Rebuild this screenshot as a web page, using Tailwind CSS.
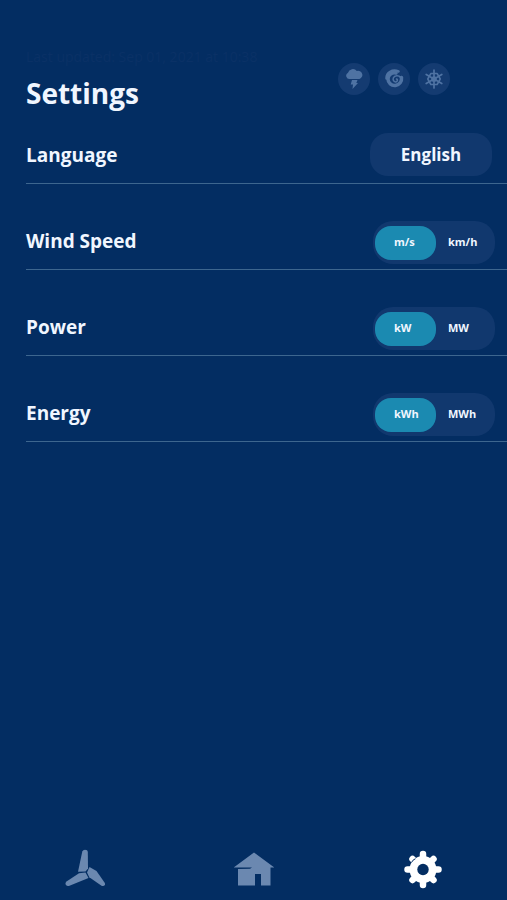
<!DOCTYPE html>
<html lang="en">
<head>
  <meta charset="UTF-8" />
  <meta name="viewport" content="width=device-width, initial-scale=1.0" />
  <title>Settings</title>
  <script src="https://cdn.jsdelivr.net/npm/@tailwindcss/browser@4"></script>
</head>
<body class="bg-[#032d62] text-[#f0f6ff] font-['Open_Sans','Noto_Sans',sans-serif] flex flex-col min-h-screen">

  <!-- Header -->
  <header class="flex justify-between pl-[26px] pr-[57px] pt-[47px]">
    <div>
      <p class="text-sm leading-5 text-[#0a3166]">Last updated: Sep 01, 2021 at 10:38</p>
      <h1 class="text-[28px] leading-9 font-bold mt-2">Settings</h1>
    </div>

    <!-- Weather alerts -->
    <ul class="flex gap-2 pt-4 text-[#4f73a3]">
      <li class="w-8 h-8 rounded-full bg-[#143b71] flex items-center justify-center">
        <svg class="w-5 h-5" viewBox="0 0 20 20" fill="currentColor" role="img" aria-label="Storm">
          <path d="M6 10a3.300 3.300 0 0 1-2-6.200A5 5 0 0 1 12.800 2a4 4 0 0 1 2.700 8z" />
          <path d="M8 11h5.500l-1.200 3h1.700L8.500 20l.5-4.500H6.700z" />
        </svg>
      </li>
      <li class="w-8 h-8 rounded-full bg-[#143b71] flex items-center justify-center">
        <svg class="w-5 h-5" viewBox="0 0 20 20" fill="none" stroke="currentColor" stroke-linecap="round" role="img" aria-label="Hurricane">
          <path d="M14.500 2.500C8.500 0 2.200 3.500 2.500 9.500" stroke-width="2.500" />
          <path d="M12 4C8 3 4 6 4 10c0 4 3.500 7 7.500 6.500 4-.5 6.500-4 6-8" stroke-width="3.500" />
          <path d="M16.500 8.500C15 6 10.500 6 9.300 9c-.8 2.500 1.200 4.500 3 3.700 1.500-.7 1.500-2.500.2-2.700" stroke-width="1.500" />
        </svg>
      </li>
      <li class="w-8 h-8 rounded-full bg-[#143b71] flex items-center justify-center">
        <svg class="w-5 h-5" viewBox="0 0 20 20" fill="none" stroke="currentColor" stroke-width="1.700" stroke-linecap="round" role="img" aria-label="Ice">
          <path d="M10 1v18M2.200 5.500l15.600 9M2.200 14.500l15.600-9" />
          <path d="M7 4.500h6M7 15.500h6M3.800 9.800l3-5.200M13.200 4.600l3 5.200M3.800 10.200l3 5.200M13.200 15.400l3-5.200" />
          <circle cx="10" cy="10" r="2" fill="currentColor" />
        </svg>
      </li>
    </ul>
  </header>

  <!-- Options -->
  <main class="flex-1 pl-[26px]">
    <div class="h-[73px] flex items-end justify-between border-b border-[#3d668f] pb-[7px] pr-[15px]">
      <label for="language" class="text-[19px] leading-[42px] font-bold">Language</label>
      <select id="language" class="appearance-none w-[122px] h-[43px] rounded-[18px] bg-[#11386e] text-[17px] leading-6 font-bold [text-align-last:center]">
        <option>English</option>
      </select>
    </div>

    <fieldset class="border-b border-[#3d668f]">
      <div class="h-[85px] flex items-end justify-between pb-[5px] pr-3">
        <legend class="text-[19px] leading-[46px] font-bold">Wind Speed</legend>
        <div class="w-[122px] h-[43px] p-[2px] rounded-[20px] bg-[#11386e] flex items-center text-[11px] font-bold">
          <label class="w-[61px] h-[34px] pl-[19px] rounded-2xl flex items-center has-checked:bg-[#1b8ab1]">
            <input type="radio" name="wind" value="ms" checked class="sr-only" />m/s
          </label>
          <label class="h-[34px] pl-3 rounded-2xl flex items-center">
            <input type="radio" name="wind" value="kmh" class="sr-only" />km/h
          </label>
        </div>
      </div>
    </fieldset>

    <fieldset class="border-b border-[#3d668f]">
      <div class="h-[85px] flex items-end justify-between pb-[5px] pr-3">
        <legend class="text-[19px] leading-[46px] font-bold">Power</legend>
        <div class="w-[122px] h-[43px] p-[2px] rounded-[20px] bg-[#11386e] flex items-center text-[11px] font-bold">
          <label class="w-[61px] h-[34px] pl-[19px] rounded-2xl flex items-center has-checked:bg-[#1b8ab1]">
            <input type="radio" name="power" value="kw" checked class="sr-only" />kW
          </label>
          <label class="h-[34px] pl-3 rounded-2xl flex items-center">
            <input type="radio" name="power" value="mw" class="sr-only" />MW
          </label>
        </div>
      </div>
    </fieldset>

    <fieldset class="border-b border-[#3d668f]">
      <div class="h-[85px] flex items-end justify-between pb-[5px] pr-3">
        <legend class="text-[19px] leading-[46px] font-bold">Energy</legend>
        <div class="w-[122px] h-[43px] p-[2px] rounded-[20px] bg-[#11386e] flex items-center text-[11px] font-bold">
          <label class="w-[61px] h-[34px] pl-[19px] rounded-2xl flex items-center has-checked:bg-[#1b8ab1]">
            <input type="radio" name="energy" value="kwh" checked class="sr-only" />kWh
          </label>
          <label class="h-[34px] pl-3 rounded-2xl flex items-center">
            <input type="radio" name="energy" value="mwh" class="sr-only" />MWh
          </label>
        </div>
      </div>
    </fieldset>
  </main>

  <!-- Bottom navigation -->
  <nav class="grid grid-cols-3 justify-items-center pb-[11px] text-[#6b88b0]">
    <a href="#turbines" aria-label="Turbines">
      <svg class="w-10 h-10" viewBox="0 0 40 40" fill="currentColor">
        <path d="M17.300 2.500q.7-1.700 2.700-1.700 2.700 0 2.800 2L23 19.500l-2.500 3-7.500.3z" />
        <path d="M1.500 32.500 14 24.300l6.500-.8 3 5.500L4.500 36.800q-2.500.8-3.700-1-.9-2 .7-3.300z" />
        <path d="M24.500 18l7 4 8 11.500q1 1.700.2 2.800-1.200 1.300-3.200.4L24.300 28.300 22 23.500z" />
      </svg>
    </a>
    <a href="#home" aria-label="Home">
      <svg class="w-10 h-10" viewBox="0 0 40 40" fill="currentColor">
        <path d="M20 3.500 40.500 18.500H36.500v18H27V25h-6v11.500H4V20l12-.2 2-1.300H-.5z" />
      </svg>
    </a>
    <a href="#settings" aria-label="Settings" aria-current="page" class="text-white">
      <svg class="w-10 h-10" viewBox="0 0 40 40">
        <g stroke="currentColor" stroke-width="6.500" stroke-linecap="round">
          <path d="M20 5v31M4.500 20.500h31M9.500 10l21 21M30.500 10l-21 21" />
        </g>
        <circle cx="20" cy="20.500" r="13.500" fill="currentColor" />
        <circle cx="20" cy="20.500" r="5.700" fill="#032d62" />
        <path d="M8.500 13.500q1.200-2.800 4-3.800" fill="none" stroke="#032d62" stroke-width="1" />
      </svg>
    </a>
  </nav>

</body>
</html>
